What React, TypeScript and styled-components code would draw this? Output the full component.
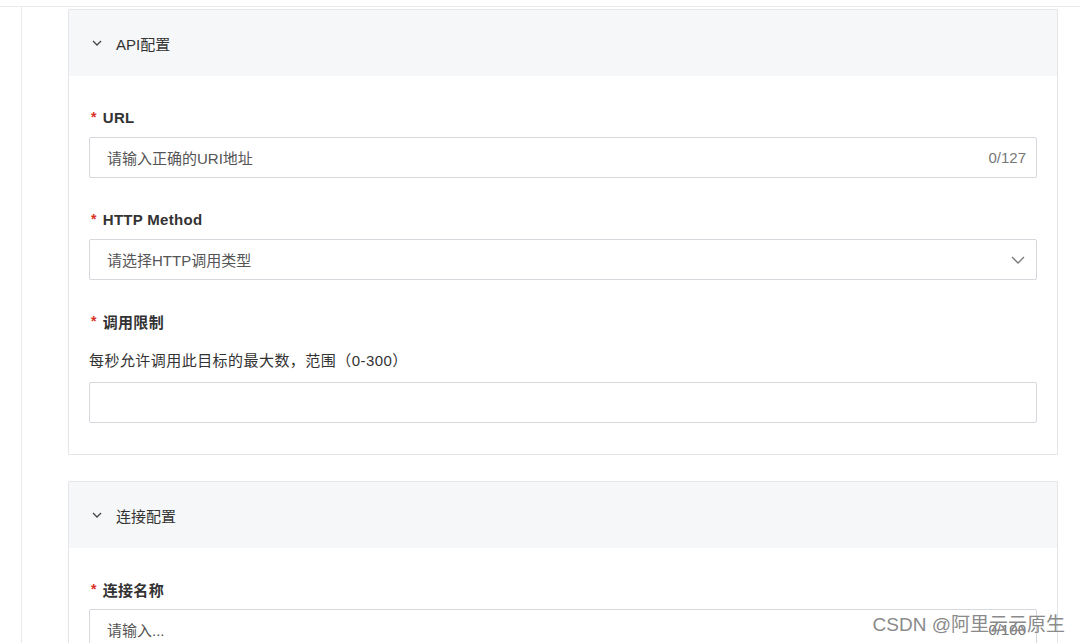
import React from "react"
import styled, { createGlobalStyle } from "styled-components"

const GlobalStyle = createGlobalStyle`
  html, body {
    margin: 0;
    padding: 0;
    background: #ffffff;
  }
  body {
    font-family: "Liberation Sans", "Noto Sans CJK SC", sans-serif;
    color: #333333;
    overflow: hidden;
  }
`

const Page = styled.div`
  position: relative;
  height: 643px;
  padding-top: 6px;
  box-sizing: border-box;
  overflow: hidden;
`

const Frame = styled.div`
  display: flex;
  height: 100%;
  border-top: 1.5px solid #ebebeb;
`

const Rail = styled.div`
  width: 21px;
  flex-shrink: 0;
  border-right: 1px solid #e9e9e9;
`

const Content = styled.div`
  flex: 1;
  display: flex;
  flex-direction: column;
  gap: 26px;
  padding: 2px 22px 0 46px;
`

const Card = styled.section`
  border: 1px solid #e3e5e8;
  border-radius: 1px;
  background: #fff;
  flex-shrink: 0;
`

const CardHeader = styled.div`
  height: 66px;
  display: flex;
  align-items: center;
  gap: 13px;
  padding-left: 22px;
  background: #f6f7f8;
  font-size: 15px;
  color: #333;
`

const CardBody = styled.div`
  display: flex;
  flex-direction: column;
  padding: 31px 20px 31px 20px;
`

const Field = styled.div<{ $last?: boolean }>`
  display: flex;
  flex-direction: column;
  margin-bottom: ${({ $last }) => ($last ? "0" : "31px")};
`

const Label = styled.label<{ $withHelp?: boolean }>`
  display: flex;
  align-items: center;
  height: 20px;
  font-size: 15px;
  font-weight: 700;
  letter-spacing: 0.3px;
  color: #333;
  margin-bottom: ${({ $withHelp }) => ($withHelp ? "0" : "10px")};
  &::before {
    content: "*";
    color: #d93026;
    font-weight: 700;
    margin: 0 6px 0 2px;
    font-size: 14px;
  }
`

const Help = styled.div`
  font-size: 15px;
  line-height: 20px;
  letter-spacing: 0.45px;
  color: #333;
  margin: 20px 0 11px;
`

const InputBox = styled.div`
  height: 41px;
  box-sizing: border-box;
  border: 1px solid #d5d8dc;
  border-radius: 2px;
  display: flex;
  align-items: center;
  justify-content: space-between;
  padding: 0 10px 0 17px;
  font-size: 15px;
`

const Placeholder = styled.span`
  color: #555;
`

const Counter = styled.span`
  color: #777;
  font-size: 15px;
`

const Watermark = styled.div`
  position: absolute;
  right: 15px;
  bottom: 7px;
  font-size: 19px;
  color: #8a8a8a;
  font-family: "Liberation Sans", "Noto Sans CJK SC", sans-serif;
`

const Chevron = () => (
  <svg width="12" height="12" viewBox="0 0 12 12" fill="none">
    <path d="M2 4l4 4 4-4" stroke="#444" strokeWidth="1.3" />
  </svg>
)

const SelectArrow = () => (
  <svg width="16" height="16" viewBox="0 0 16 16" fill="none">
    <path d="M2 5l6 6 6-6" stroke="#777" strokeWidth="1.3" />
  </svg>
)

const App: React.FC = () => {
  return (
    <Page>
      <GlobalStyle />
      <Frame>
        <Rail />
        <Content>
          <Card>
            <CardHeader>
              <Chevron />
              <span>API配置</span>
            </CardHeader>
            <CardBody>
              <Field>
                <Label>URL</Label>
                <InputBox>
                  <Placeholder>请输入正确的URI地址</Placeholder>
                  <Counter>0/127</Counter>
                </InputBox>
              </Field>
              <Field>
                <Label>HTTP Method</Label>
                <InputBox>
                  <Placeholder>请选择HTTP调用类型</Placeholder>
                  <SelectArrow />
                </InputBox>
              </Field>
              <Field $last>
                <Label $withHelp>调用限制</Label>
                <Help>每秒允许调用此目标的最大数，范围（0-300）</Help>
                <InputBox />
              </Field>
            </CardBody>
          </Card>
          <Card>
            <CardHeader>
              <Chevron />
              <span>连接配置</span>
            </CardHeader>
            <CardBody>
              <Field>
                <Label>连接名称</Label>
                <InputBox>
                  <Placeholder>请输入...</Placeholder>
                  <Counter>0/100</Counter>
                </InputBox>
              </Field>
            </CardBody>
          </Card>
        </Content>
      </Frame>
      <Watermark>CSDN @阿里云云原生</Watermark>
    </Page>
  )
}

export default App
